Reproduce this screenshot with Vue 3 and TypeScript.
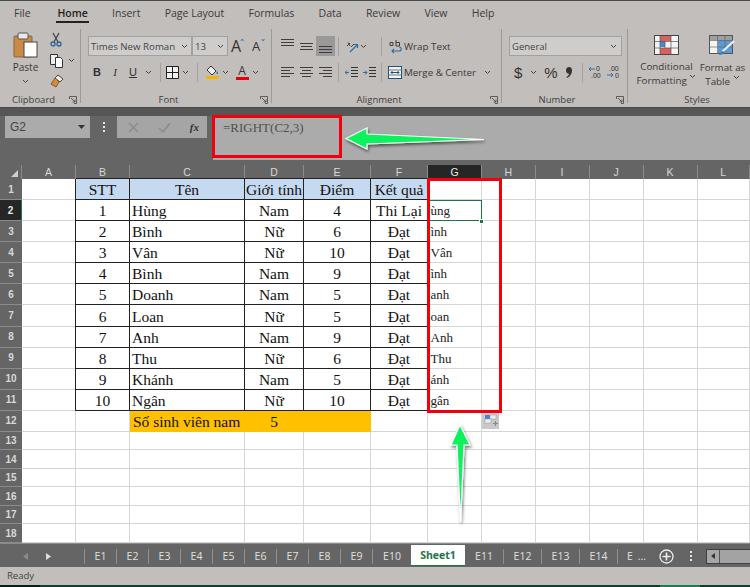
<script setup lang="ts">
interface Row {
  stt: string
  name: string
  gender: string
  score: string
  result: string
  right: string
}

const menuTabs = ['File', 'Home', 'Insert', 'Page Layout', 'Formulas', 'Data', 'Review', 'View', 'Help']
const columns = ['A', 'B', 'C', 'D', 'E', 'F', 'G', 'H', 'I', 'J', 'K', 'L']
const trailing = ['H', 'I', 'J', 'K', 'L']
const emptyRows = [13, 14, 15, 16, 17, 18]
const leftTabs = ['E1', 'E2', 'E3', 'E4', 'E5', 'E6', 'E7', 'E8', 'E9', 'E10']
const rightTabs = ['E11', 'E12', 'E13', 'E14', 'E ...']

const rows: Row[] = [
  { stt: '1', name: 'Hùng', gender: 'Nam', score: '4', result: 'Thi Lại', right: 'ùng' },
  { stt: '2', name: 'Bình', gender: 'Nữ', score: '6', result: 'Đạt', right: 'ình' },
  { stt: '3', name: 'Vân', gender: 'Nữ', score: '10', result: 'Đạt', right: 'Vân' },
  { stt: '4', name: 'Bình', gender: 'Nam', score: '9', result: 'Đạt', right: 'ình' },
  { stt: '5', name: 'Doanh', gender: 'Nam', score: '5', result: 'Đạt', right: 'anh' },
  { stt: '6', name: 'Loan', gender: 'Nữ', score: '5', result: 'Đạt', right: 'oan' },
  { stt: '7', name: 'Anh', gender: 'Nam', score: '9', result: 'Đạt', right: 'Anh' },
  { stt: '8', name: 'Thu', gender: 'Nữ', score: '6', result: 'Đạt', right: 'Thu' },
  { stt: '9', name: 'Khánh', gender: 'Nam', score: '5', result: 'Đạt', right: 'ánh' },
  { stt: '10', name: 'Ngân', gender: 'Nữ', score: '10', result: 'Đạt', right: 'gân' },
]
</script>

<template>
  <div class="excel">
    <header class="menu">
      <span v-for="tab in menuTabs" :key="tab" class="menu__tab" :class="{ 'menu__tab--active': tab === 'Home' }">{{ tab }}</span>
    </header>

    <section class="ribbon">
      <div class="group group--clipboard">
        <div class="group__body clip">
          <div class="clip__paste">
            <svg width="26" height="26" viewBox="0 0 26 26">
              <rect x="1" y="4" width="18" height="21" rx="1" fill="#c98a45" stroke="#8a6236" />
              <rect x="5" y="1" width="10" height="6" rx="1" fill="#e8e8e8" stroke="#555" />
              <rect x="11" y="10" width="13" height="15" fill="#fff" stroke="#444" />
            </svg>
            <span>Paste</span>
            <svg class="chev" width="7" height="5" viewBox="0 0 7 5"><path d="M1 1l2.500 2.500L6 1" /></svg>
          </div>
          <div class="clip__tools">
            <svg width="12" height="15" viewBox="0 0 12 15" fill="none" stroke="#2c5f95" stroke-width="1.300">
              <path d="M3 1l5 9M9 1L4 10" stroke="#444" />
              <circle cx="3" cy="12" r="2" />
              <circle cx="9" cy="12" r="2" />
            </svg>
            <div class="clip__copy">
              <svg width="15" height="15" viewBox="0 0 15 15" fill="#eee" stroke="#333">
                <path d="M1.500 1.500h7v10h-7z" />
                <path d="M6.500 4.500h5l2 2v8h-7z" fill="#fff" />
              </svg>
              <svg class="chev" width="7" height="5" viewBox="0 0 7 5"><path d="M1 1l2.500 2.500L6 1" /></svg>
            </div>
            <svg width="14" height="14" viewBox="0 0 14 14">
              <path d="M8 1l5 4-3 3-5-4z" fill="#eee" stroke="#444" />
              <path d="M5 4l4 4-3 5-5-3z" fill="#d58b3e" stroke="#8a5a2c" />
            </svg>
          </div>
        </div>
        <div class="group__label">
          <span>Clipboard</span>
          <svg class="launcher" width="8" height="8" viewBox="0 0 8 8"><path d="M.5 3V.5H7.500V7.500H5M2 2l4 4M6 3.500V6H3.500" /></svg>
        </div>
      </div>

      <div class="group group--font">
        <div class="group__body font">
          <div class="tool-row">
            <div class="select select--font">
              <span>Times New Roman</span>
              <svg class="chev" width="7" height="5" viewBox="0 0 7 5"><path d="M1 1l2.500 2.500L6 1" /></svg>
            </div>
            <div class="select select--size">
              <span>13</span>
              <svg class="chev" width="7" height="5" viewBox="0 0 7 5"><path d="M1 1l2.500 2.500L6 1" /></svg>
            </div>
            <span class="grow-a grow-a--big">A<i class="caret">ˆ</i></span>
            <span class="grow-a">A<i class="caret">ˇ</i></span>
          </div>
          <div class="tool-row font__row">
            <b class="fmt fmt--b">B</b>
            <i class="fmt fmt--i">I</i>
            <u class="fmt fmt--u">U</u>
            <svg class="chev" width="7" height="5" viewBox="0 0 7 5"><path d="M1 1l2.500 2.500L6 1" /></svg>
            <span class="vsep font__sep1"></span>
            <svg width="13" height="13" viewBox="0 0 13 13" fill="#f2f2f2" stroke="#222">
              <path d="M.5.500h12v12H.5zM6.500.500v12M.5 6.500h12" />
            </svg>
            <svg class="chev" width="7" height="5" viewBox="0 0 7 5"><path d="M1 1l2.500 2.500L6 1" /></svg>
            <span class="vsep"></span>
            <div class="swatch-icon">
              <svg width="13" height="11" viewBox="0 0 13 11">
                <path d="M5 1l5 5-4 4-5-5z" fill="#eee" stroke="#333" />
                <path d="M11 6c1 1.500 1.500 2.500 .5 3s-1.500-1-.5-3z" fill="#2c6ea8" />
              </svg>
              <span class="swatch swatch--yellow"></span>
            </div>
            <svg class="chev" width="7" height="5" viewBox="0 0 7 5"><path d="M1 1l2.500 2.500L6 1" /></svg>
            <div class="swatch-icon">
              <span class="swatch-letter">A</span>
              <span class="swatch swatch--red"></span>
            </div>
            <svg class="chev" width="7" height="5" viewBox="0 0 7 5"><path d="M1 1l2.500 2.500L6 1" /></svg>
          </div>
        </div>
        <div class="group__label">
          <span>Font</span>
          <svg class="launcher" width="8" height="8" viewBox="0 0 8 8"><path d="M.5 3V.5H7.500V7.500H5M2 2l4 4M6 3.500V6H3.500" /></svg>
        </div>
      </div>

      <div class="group group--align">
        <div class="group__body align">
          <div class="tool-row">
            <span class="lines lines--top"><i></i><i></i><i></i></span>
            <span class="lines lines--mid"><i></i><i></i><i></i></span>
            <span class="lines lines--bottom lines--on"><i></i><i></i><i></i></span>
            <span class="vsep align__sep"></span>
            <svg class="align__orient" width="15" height="15" viewBox="0 0 15 15" fill="none">
              <path d="M2 7l3-3M3 3.500l2 3.500M6 8l3-3" stroke="#444" stroke-width="1" />
              <path d="M5 13l7-7M9 5.500h3.500V9" stroke="#2c6ea8" stroke-width="1.200" />
            </svg>
            <svg class="chev" width="7" height="5" viewBox="0 0 7 5"><path d="M1 1l2.500 2.500L6 1" /></svg>
            <span class="vsep align__sep2"></span>
            <svg width="13" height="15" viewBox="0 0 13 15" fill="none">
              <path d="M1 3.500h3v3H1zM7 1v6h3.500V3.500H7" stroke="#333" stroke-width=".9" />
              <path d="M10 8c3 0 3 4 0 4H3M5 10l-2 2 2 2" stroke="#2c6ea8" stroke-width="1.100" />
            </svg>
            <span class="align__label">Wrap Text</span>
          </div>
          <div class="tool-row align__row">
            <span class="lines lines--l"><i></i><i></i><i></i><i></i></span>
            <span class="lines lines--c"><i></i><i></i><i></i><i></i></span>
            <span class="lines lines--r"><i></i><i></i><i></i><i></i></span>
            <span class="vsep align__sep"></span>
            <svg width="13" height="11" viewBox="0 0 13 11" fill="none" stroke="#333">
              <path d="M6 .5h7M6 3.500h7M6 6.500h7M6 9.500h7" />
              <path d="M0 5.500h4M2 3.500l-2 2 2 2" stroke="#2c6ea8" />
            </svg>
            <svg width="13" height="11" viewBox="0 0 13 11" fill="none" stroke="#333">
              <path d="M6 .5h7M6 3.500h7M6 6.500h7M6 9.500h7" />
              <path d="M0 5.500h4M2 3.500l2 2-2 2" stroke="#2c6ea8" />
            </svg>
            <span class="vsep align__sep3"></span>
            <svg class="align__merge" width="14" height="13" viewBox="0 0 14 13" fill="#f3f3f3" stroke="#1d4f80">
              <rect x=".5" y=".5" width="13" height="12" />
              <path d="M.5 4h13M.5 9h13" stroke="#777" />
              <path d="M3 6.500h8M4.500 5l-1.500 1.500L4.500 8M9.500 5L11 6.500 9.500 8" fill="none" />
            </svg>
            <span class="align__label">Merge &amp; Center</span>
            <svg class="chev align__chev" width="7" height="5" viewBox="0 0 7 5"><path d="M1 1l2.500 2.500L6 1" /></svg>
          </div>
        </div>
        <div class="group__label">
          <span>Alignment</span>
          <svg class="launcher" width="8" height="8" viewBox="0 0 8 8"><path d="M.5 3V.5H7.500V7.500H5M2 2l4 4M6 3.500V6H3.500" /></svg>
        </div>
      </div>

      <div class="group group--number">
        <div class="group__body number">
          <div class="select select--general">
            <span>General</span>
            <svg class="chev" width="7" height="5" viewBox="0 0 7 5"><path d="M1 1l2.500 2.500L6 1" /></svg>
          </div>
          <div class="tool-row number__row">
            <span class="num-sym num-sym--dollar">$</span>
            <svg class="chev" width="7" height="5" viewBox="0 0 7 5"><path d="M1 1l2.500 2.500L6 1" /></svg>
            <span class="num-sym num-sym--pct">%</span>
            <svg class="number__comma" width="6" height="11" viewBox="0 0 6 11">
              <path d="M3 0c2 0 3 1.500 3 3.500C6 7 4 9.500 1 11l-.5-1C2 9 3 8 3.200 6.800 1.400 7 0 5.500 0 3.500 0 1.500 1.200 0 3 0z" fill="#333" />
            </svg>
            <span class="vsep number__sep"></span>
            <svg width="14" height="14" viewBox="0 0 14 14" fill="none">
              <path d="M0 4h6M2 2L0 4l2 2" stroke="#2c6ea8" />
              <text x="7" y="6" font-size="7" fill="#333" font-family="Liberation Sans">0</text>
              <text x="2" y="13" font-size="7" fill="#333" font-family="Liberation Sans">.00</text>
            </svg>
            <svg width="14" height="14" viewBox="0 0 14 14" fill="none">
              <text x="2" y="6" font-size="7" fill="#333" font-family="Liberation Sans">.00</text>
              <path d="M0 10h6M4 8l2 2-2 2" stroke="#2c6ea8" />
              <text x="8" y="13" font-size="7" fill="#333" font-family="Liberation Sans">0</text>
            </svg>
          </div>
        </div>
        <div class="group__label">
          <span>Number</span>
          <svg class="launcher" width="8" height="8" viewBox="0 0 8 8"><path d="M.5 3V.5H7.500V7.500H5M2 2l4 4M6 3.500V6H3.500" /></svg>
        </div>
      </div>

      <div class="group group--styles">
        <div class="group__body styles">
          <div class="style-btn">
            <svg width="25" height="20" viewBox="0 0 25 20">
              <rect x=".5" y=".5" width="24" height="19" fill="#f4f4f4" stroke="#444" />
              <rect x="6" y="1" width="11" height="5" fill="#d9605f" />
              <rect x="6" y="6" width="5" height="6" fill="#4a8ad0" />
              <rect x="6" y="13" width="11" height="6" fill="#d9605f" />
              <path d="M6 0v20M11 6v7M17 0v20M0 6.500h25M0 13h25" stroke="#555" fill="none" stroke-width=".7" />
            </svg>
            <span>Conditional</span>
            <span>Formatting <svg class="chev" width="7" height="5" viewBox="0 0 7 5"><path d="M1 1l2.500 2.500L6 1" /></svg></span>
          </div>
          <div class="style-btn style-btn--table">
            <svg width="26" height="21" viewBox="0 0 26 21">
              <rect x=".5" y=".5" width="23" height="18" fill="#f4f4f4" stroke="#555" />
              <rect x="1" y="1" width="22" height="4" fill="#5a5a5a" opacity=".55" />
              <rect x="9" y="5" width="14" height="13" fill="#5b9bd5" />
              <path d="M8.500 0v19M16 0v19M0 5.500h24M0 12h24" stroke="#666" stroke-width=".7" />
              <path d="M25 6L13 17" stroke="#eee" stroke-width="2.200" />
              <path d="M14 16c-2 0-3 2-4 4 3 0 5-1 5-3z" fill="#3f7fbd" />
            </svg>
            <span>Format as</span>
            <span>Table <svg class="chev" width="7" height="5" viewBox="0 0 7 5"><path d="M1 1l2.500 2.500L6 1" /></svg></span>
          </div>
        </div>
        <div class="group__label group__label--styles">
          <span>Styles</span>
        </div>
      </div>
    </section>

    <section class="formula">
      <div class="namebox">
        <span>G2</span>
        <svg width="7" height="4" viewBox="0 0 7 4"><path d="M0 0h7L3.500 4z" fill="#333" /></svg>
      </div>
      <div class="dots"><i></i><i></i><i></i></div>
      <div class="fx-box">
        <svg width="11" height="11" viewBox="0 0 11 11" fill="none" stroke="#8b8b8b" stroke-width="1.500"><path d="M1 1l9 9M10 1l-9 9" /></svg>
        <svg width="13" height="11" viewBox="0 0 13 11" fill="none" stroke="#8b8b8b" stroke-width="1.500"><path d="M1 6l4 4 7-9" /></svg>
        <span class="fx-box__fx">fx</span>
      </div>
      <div class="formula__input">=RIGHT(C2,3)</div>
    </section>

    <section class="sheet">
      <div class="hd hd--corner"><span class="corner-mark"></span></div>
      <div v-for="col in columns" :key="col" class="hd" :class="{ 'hd--on': col === 'G' }">{{ col }}</div>

      <div class="hd hd--row">1</div>
      <div class="cell"></div>
      <div class="cell cell--t cell--title">STT</div>
      <div class="cell cell--t cell--title">Tên</div>
      <div class="cell cell--t cell--title">Giới tính</div>
      <div class="cell cell--t cell--title">Điểm</div>
      <div class="cell cell--t cell--title">Kết quả</div>
      <div class="cell"></div>
      <div v-for="col in trailing" :key="'h1' + col" class="cell"></div>

      <template v-for="(row, i) in rows" :key="row.stt">
        <div class="hd hd--row" :class="{ 'hd--on hd--sel': i === 0 }">{{ i + 2 }}</div>
        <div class="cell"></div>
        <div class="cell cell--t cell--mid">{{ row.stt }}</div>
        <div class="cell cell--t">{{ row.name }}</div>
        <div class="cell cell--t cell--mid">{{ row.gender }}</div>
        <div class="cell cell--t cell--mid">{{ row.score }}</div>
        <div class="cell cell--t cell--mid">{{ row.result }}</div>
        <div class="cell cell--small" :class="{ 'cell--active': i === 0 }">{{ row.right }}</div>
        <div v-for="col in trailing" :key="row.stt + col" class="cell"></div>
      </template>

      <div class="hd hd--row">12</div>
      <div class="cell"></div>
      <div class="cell"></div>
      <div class="cell cell--count">Số sinh viên nam</div>
      <div class="cell cell--count cell--mid">5</div>
      <div class="cell cell--count"></div>
      <div class="cell"></div>
      <div class="cell"></div>
      <div v-for="col in trailing" :key="'r12' + col" class="cell"></div>

      <template v-for="n in emptyRows" :key="n">
        <div class="hd hd--row">{{ n }}</div>
        <div v-for="col in columns" :key="n + col" class="cell"></div>
      </template>
    </section>

    <footer class="tabs">
      <div class="tabs__nav">
        <svg width="5" height="7" viewBox="0 0 5 7"><path d="M5 0v7L0 3.500z" fill="#8a8a8a" /></svg>
        <svg width="5" height="7" viewBox="0 0 5 7"><path d="M0 0v7l5-3.500z" fill="#ddd" /></svg>
      </div>
      <span v-for="t in leftTabs" :key="t" class="tab" :class="{ 'tab--wide': t === 'E10' }">{{ t }}</span>
      <span class="tab tab--active">Sheet1</span>
      <span v-for="t in rightTabs" :key="t" class="tab tab--right">{{ t }}</span>
      <svg class="tabs__add" width="15" height="15" viewBox="0 0 15 15" fill="none" stroke="#eee" stroke-width="1.300">
        <circle cx="7.500" cy="7.500" r="6.500" />
        <path d="M7.500 3.500v8M3.500 7.500h8" stroke-width="1.600" />
      </svg>
      <div class="dots dots--tabs"><i></i><i></i><i></i></div>
      <div class="scroll">
        <span class="scroll__btn"><svg width="4" height="6" viewBox="0 0 4 6"><path d="M4 0v6L0 3z" fill="#333" /></svg></span>
        <span class="scroll__thumb"></span>
      </div>
    </footer>

    <div class="status">Ready</div>
    <div class="taskbar"></div>

    <!-- callouts drawn on top of the screenshot -->
    <div class="mark mark--formula"></div>
    <div class="mark mark--column"></div>
    <div class="handle"></div>
    <div class="autofill">
      <svg width="15" height="13" viewBox="0 0 15 13">
        <rect x="1" y="1" width="5" height="4" fill="#4a7fe0" />
        <rect x="6" y="1" width="6" height="4" fill="#eee" stroke="#999" stroke-width=".5" />
        <rect x="1" y="5" width="6" height="4" fill="#eee" stroke="#999" stroke-width=".5" />
        <path d="M9 9.500h5M11.500 7v5" stroke="#888" stroke-width="1.200" />
      </svg>
    </div>
    <svg class="overlay" width="750" height="587" viewBox="0 0 750 587">
      <defs>
        <filter id="arrowShadow" x="-20%" y="-20%" width="140%" height="140%">
          <feDropShadow dx="1" dy="2" stdDeviation="1.500" flood-color="#000" flood-opacity=".55" />
        </filter>
      </defs>
      <path d="M346 138.500L367 128V134L484 139.500L367 144V149Z" fill="#0bf25c" stroke="#fff" stroke-width="1.200" filter="url(#arrowShadow)" />
      <path d="M460 425L470 445H464L460.500 522L457 445H451Z" fill="#0bf25c" stroke="#fff" stroke-width="1.200" filter="url(#arrowShadow)" />
    </svg>
  </div>
</template>

<style scoped>
.excel {
  position: relative;
  width: 750px;
  height: 587px;
  overflow: hidden;
  background: #656565;
  font-family: "Open Sans", "Noto Sans", sans-serif;
  color: #3a3a3a;
}

.menu {
  box-sizing: border-box;
  height: 27px;
  display: flex;
  align-items: center;
  gap: 24.300px;
  padding: 0 0 2px 14px;
  background: #c2bebb;
  border-top: 1px solid #4a4a4a;
  font-size: 10.500px;
}
.menu__tab {
  position: relative;
  white-space: nowrap;
}
.menu__tab:first-child {
  margin-right: 2.500px;
}
.menu__tab--active {
  font-weight: 600;
  color: #222;
}
.menu__tab--active::after {
  content: "";
  position: absolute;
  left: -1px;
  right: -1px;
  bottom: -3px;
  height: 2px;
  background: #222;
}

.ribbon {
  display: flex;
  height: 81px;
  background: #c2bebb;
  border-bottom: 1px solid #4b4b4b;
  box-sizing: border-box;
}
.group {
  display: flex;
  flex-direction: column;
  flex-shrink: 0;
  margin: 2px 0 4px;
  box-sizing: border-box;
  border-right: 1px solid #9c9996;
}
.group--clipboard { width: 81px; }
.group--font { width: 191px; }
.group--align { width: 230px; }
.group--number { width: 126px; }
.group--styles { width: 122px; border-right: 0; }

.group__body {
  flex: 1;
  min-height: 0;
}
.group__label {
  position: relative;
  height: 14px;
  margin-bottom: -4px;
  padding-right: 15px;
  line-height: 13px;
  text-align: center;
  font-size: 9.500px;
  color: #3f3f3f;
}
.group__label span {
  white-space: nowrap;
}
.group--clipboard .group__label {
  text-align: left;
  padding-left: 12px;
}
.group__label--styles {
  padding-right: 0;
  margin-left: 42px;
  text-align: center;
  width: 54px;
}
.launcher {
  position: absolute;
  right: 3px;
  top: 3px;
  fill: none;
  stroke: #444;
  stroke-width: .8;
}

.chev {
  fill: none;
  stroke: #444;
  stroke-width: 1;
  flex-shrink: 0;
}

.tool-row {
  display: flex;
  align-items: center;
}
.vsep {
  display: block;
  width: 1px;
  height: 19px;
  background: #a4a19e;
  flex-shrink: 0;
}

.clip {
  display: flex;
  padding-left: 12px;
  gap: 6px;
}
.clip__paste {
  display: flex;
  flex-direction: column;
  align-items: center;
  width: 27px;
  padding-top: 3px;
  font-size: 10px;
}
.clip__paste span {
  margin-top: 2px;
  line-height: 14px;
}
.clip__paste .chev {
  margin-top: 5px;
}
.clip__tools {
  display: flex;
  flex-direction: column;
  gap: 6px;
  padding: 3px 0 0 5px;
}
.clip__copy {
  display: flex;
  align-items: center;
  gap: 4px;
  margin-left: -1px;
}

.select {
  box-sizing: border-box;
  display: flex;
  align-items: center;
  justify-content: space-between;
  height: 20px;
  padding: 0 3px 0 2px;
  background: #cfcdcb;
  border: 1px solid #a3a19f;
  font-size: 9.700px;
  color: #444;
}
.font {
  padding: 7px 0 0 7px;
}
.select--font { width: 104px; }
.select--size { width: 36px; }
.grow-a {
  position: relative;
  font-size: 13px;
  line-height: 20px;
  width: 17px;
  margin-left: 4px;
  color: #333;
}
.grow-a--big {
  font-size: 16px;
  margin-left: 3px;
}
.caret {
  position: absolute;
  top: -2px;
  left: 9px;
  font-style: normal;
  font-size: 10px;
  color: #2c6ea8;
}
.font__row {
  margin-top: 6px;
  height: 20px;
}
.fmt {
  width: 18px;
  text-align: center;
  font-size: 11px;
  font-family: "Liberation Sans", sans-serif;
  color: #333;
}
.fmt--i { font-family: "Liberation Serif", serif; }
.font__row .chev {
  margin: 0 6px 0 3px;
}
.font__row .vsep { margin-right: 7px; margin-left: 2px; }
.font__row .font__sep1 { margin-right: 5px; }
.swatch-icon {
  display: flex;
  flex-direction: column;
  align-items: center;
  width: 14px;
}
.swatch {
  display: block;
  width: 13px;
  height: 3px;
  margin-top: 0;
}
.swatch--yellow { background: #f4b400; }
.swatch--red { background: #e8000f; }
.swatch-letter {
  font-size: 12px;
  line-height: 12px;
  color: #333;
}

.align {
  padding: 7px 0 0 6px;
}
.lines {
  box-sizing: border-box;
  display: flex;
  flex-direction: column;
  width: 19px;
  height: 20px;
  padding: 0 3px;
  gap: 2px;
}
.lines i {
  display: block;
  height: 1px;
  background: #3d3d3d;
}
.lines--top { justify-content: flex-start; padding-top: 3px; }
.lines--mid { justify-content: center; }
.lines--mid i:nth-child(2) { margin: 0 1px; }
.lines--bottom { justify-content: flex-end; padding-bottom: 3px; }
.lines--on { background: #9b9997; }
.lines--l, .lines--c, .lines--r { justify-content: center; gap: 2px; }
.lines--l i:nth-child(even) { margin-right: 4px; }
.lines--c i:nth-child(even) { margin: 0 2px; }
.lines--r i:nth-child(even) { margin-left: 4px; }
.align__sep { margin: 0 6px 0 3px; }
.align__sep2 { margin: 0 7px 0 14px; }
.align__sep3 { margin: 0 6px 0 0; }
.align__row { margin-top: 6px; }
.align__row svg { margin-right: 5px; }
.align__row .align__merge { margin-right: 2px; }
.align__label {
  margin-left: 2px;
  font-size: 9.800px;
  white-space: nowrap;
}
.align__row .align__label { margin-left: 0; }
.align__row .align__chev { margin: 0 0 0 8px; }

.number {
  padding: 7px 0 0 7px;
}
.select--general {
  width: 113px;
  font-size: 9.500px;
  padding: 0 4px 0 2px;
}
.number__row {
  margin-top: 6px;
  height: 20px;
  padding-left: 5px;
}
.number__row .chev { margin: 0 7px 0 8px; }
.num-sym {
  color: #333;
  font-family: "Liberation Sans", sans-serif;
}
.num-sym--dollar { font-size: 15px; }
.num-sym--pct { font-size: 15px; }
.number__comma { margin-left: 8px; }
.number__sep { margin: 0 6px 0 10px; }
.number__row svg + svg { margin-left: 4px; }

.styles {
  display: flex;
  padding-top: 6px;
}
.style-btn {
  display: flex;
  flex-direction: column;
  align-items: center;
  width: 68px;
  margin-left: 5px;
  font-size: 9.800px;
  line-height: 14px;
  white-space: nowrap;
}
.style-btn svg:first-child {
  margin-bottom: 5px;
}
.style-btn--table {
  margin-left: -5px;
  width: 56px;
}

.formula {
  box-sizing: border-box;
  display: flex;
  height: 57px;
  padding-top: 8px;
  background: linear-gradient(to bottom, #565656 0 8px, #656565 8px);
}
.namebox {
  box-sizing: border-box;
  display: flex;
  align-items: center;
  justify-content: space-between;
  width: 85px;
  height: 22px;
  margin-left: 5px;
  padding: 0 5px;
  background: #ababab;
  font-family: "Liberation Sans", sans-serif;
  font-size: 12px;
  color: #444;
}
.dots {
  display: flex;
  flex-direction: column;
  align-items: center;
  gap: 2px;
  width: 27px;
  padding-top: 6px;
}
.dots i {
  width: 2px;
  height: 2px;
  background: #e6e6e6;
}
.fx-box {
  box-sizing: border-box;
  display: flex;
  align-items: center;
  justify-content: space-between;
  width: 90px;
  height: 22px;
  padding: 0 8px 0 11px;
  background: #a5a5a5;
}
.fx-box__fx {
  font-family: "Liberation Serif", serif;
  font-style: italic;
  font-weight: 700;
  font-size: 11px;
  color: #333;
}
.formula__input {
  flex: 1;
  height: 40px;
  margin-left: 6px;
  padding: 4px 0 0 10px;
  background: #ababab;
  font-family: "Liberation Serif", serif;
  font-size: 13px;
  color: #505050;
}

.sheet {
  display: grid;
  grid-template-columns: 22px 54px 54px 115px 59px 67px 57px 54px 53.500px 54px 54px 54px 52.500px;
  grid-template-rows: 14px repeat(11, 21.090px) 21px repeat(6, 18.500px);
  height: 378px;
  background: #fff;
  font-family: "Liberation Serif", serif;
  color: #111;
}
.hd {
  box-sizing: border-box;
  display: flex;
  align-items: center;
  justify-content: center;
  background: #656565;
  border-right: 1px solid #8b8b8b;
  font-family: "Liberation Sans", sans-serif;
  font-size: 10.500px;
  color: #d8d8d8;
}
.hd--row {
  border-right: 0;
  border-bottom: 1px solid #8b8b8b;
  font-weight: 700;
  font-size: 10px;
}
.hd--on {
  background: #262626;
  color: #e8e8e8;
}
.hd--sel {
  border-right: 1px solid #217346;
}
.hd--corner {
  position: relative;
}
.corner-mark {
  position: absolute;
  right: 3px;
  bottom: 2px;
  border-left: 7px solid transparent;
  border-bottom: 7px solid #cfcfcf;
}

.cell {
  box-sizing: border-box;
  display: flex;
  align-items: flex-end;
  overflow: hidden;
  white-space: nowrap;
  border-right: 1px solid #d6d6d6;
  border-bottom: 1px solid #d6d6d6;
  padding-left: 2px;
  padding-bottom: 1px;
  line-height: 17px;
  font-size: 15.500px;
}
.cell--t {
  border-right: 1px solid #222;
  border-bottom: 1px solid #222;
  box-shadow: -1px 0 0 #222;
}
.cell--mid {
  justify-content: center;
  padding-left: 0;
}
.cell--title {
  justify-content: center;
  padding-left: 0;
  background: #c5d9f1;
  box-shadow: -1px 0 0 #222, 0 -1px 0 #222;
}
.cell--small {
  font-size: 13px;
  padding-left: 2.500px;
  color: #222;
}
.cell--active {
  border: 1px solid #217346;
  padding-left: 1.500px;
}
.cell--count {
  background: #ffc000;
  border-color: #ffc000;
  padding-left: 3px;
}
.cell--count.cell--mid {
  padding-left: 0;
}

.tabs {
  box-sizing: border-box;
  display: flex;
  align-items: center;
  height: 24px;
  padding-top: 1px;
  background: #656565;
  border-top: 1px solid #8b8b8b;
  font-size: 10.500px;
  color: #e0e0e0;
}
.tabs__nav {
  display: flex;
  align-items: center;
  gap: 18px;
  box-sizing: border-box;
  width: 84px;
  padding-left: 23px;
}
.tab {
  box-sizing: border-box;
  flex-shrink: 0;
  width: 32px;
  height: 15px;
  line-height: 15px;
  text-align: center;
  border-left: 1px solid #8f8f8f;
  white-space: nowrap;
  word-spacing: 2px;
}
.tab--wide {
  width: 39px;
}
.tab--active {
  width: 54px;
  height: 21px;
  margin-top: -2px;
  line-height: 20px;
  background: #fff;
  border-left: 0;
  border-bottom: 1px solid #217346;
  font-weight: 700;
  color: #217346;
}
.tab--right {
  width: 38px;
}
.tab--active + .tab--right {
  border-left: 0;
}
.tabs__add {
  margin-left: 3.500px;
  flex-shrink: 0;
}
.dots--tabs {
  width: 30px;
  margin-left: 2px;
  padding-top: 0;
  flex-shrink: 0;
}
.scroll {
  display: flex;
  flex: 1;
  height: 13px;
  background: #888;
  border: 1px solid #3f3f3f;
  border-right: 0;
}
.scroll__btn {
  display: flex;
  align-items: center;
  justify-content: center;
  width: 12px;
  background: #a7a7a7;
  border-right: 1px solid #555;
}
.scroll__thumb {
  flex: 1;
  background: #a3a3a3;
}

.status {
  box-sizing: border-box;
  height: 18px;
  padding-left: 7px;
  line-height: 18px;
  background: #c2bebb;
  font-size: 9.500px;
  color: #444;
}
.taskbar {
  height: 2px;
  background: linear-gradient(to right, #062018 0 40px, #113d2e 40px 660px, #1f7a57 660px 700px, #113d2e 700px);
}

.mark {
  position: absolute;
  box-sizing: border-box;
  border: 3px solid #f2000c;
}
.mark--formula {
  left: 212px;
  top: 115px;
  width: 130px;
  height: 43px;
}
.mark--column {
  left: 427px;
  top: 178px;
  width: 75px;
  height: 235px;
}
.handle {
  position: absolute;
  left: 479px;
  top: 219px;
  width: 5px;
  height: 5px;
  background: #217346;
  border: 1px solid #fff;
  box-sizing: border-box;
}
.autofill {
  position: absolute;
  left: 482px;
  top: 413px;
  width: 17px;
  height: 16px;
  box-sizing: border-box;
  padding: 1px 0 0 2px;
  background: #c9c9c9;
}
.autofill svg {
  display: block;
}
.overlay {
  position: absolute;
  left: 0;
  top: 0;
  pointer-events: none;
}
</style>
